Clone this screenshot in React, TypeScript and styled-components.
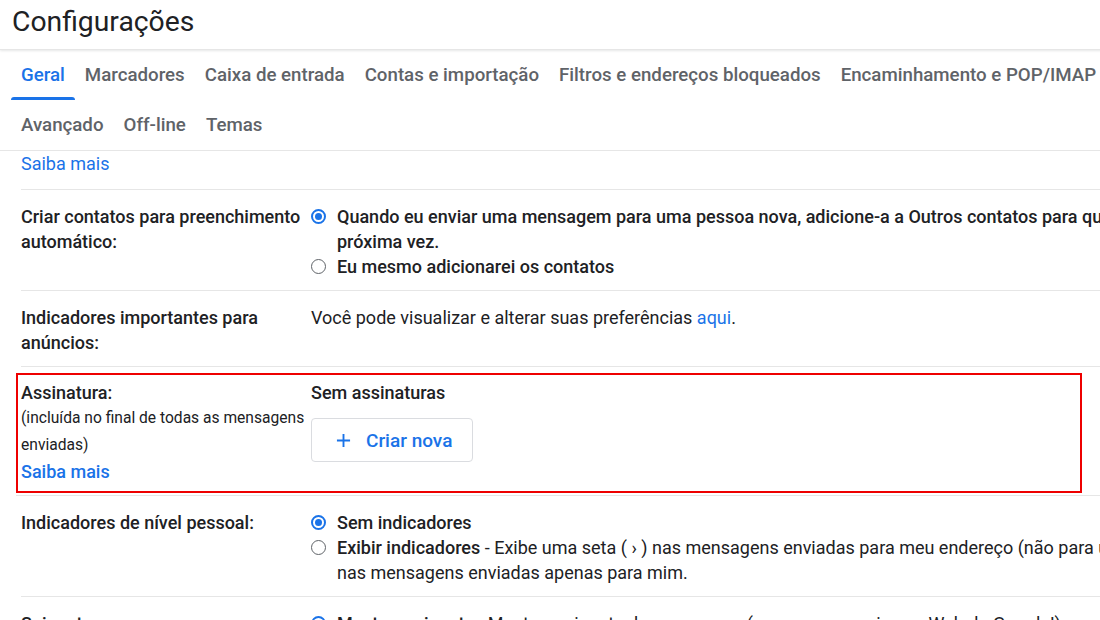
import styled, { createGlobalStyle, css } from 'styled-components';

const GlobalStyle = createGlobalStyle`
  body {
    margin: 0;
    overflow: hidden;
    background: #fff;
    font-family: Roboto, "Liberation Sans", Arial, sans-serif;
    color: #202124;
  }
`;

const Page = styled.div`
  width: 1600px;
`;

const Header = styled.header`
  height: 49px;
  padding: 0 12px;
  display: flex;
  align-items: center;
  border-bottom: 1px solid #e6e6e6;
  box-shadow: 0 1px 2px rgba(60, 64, 67, 0.12);
`;

const Title = styled.h1`
  margin: 0 0 6px;
  font-size: 28.3px;
  font-weight: 400;
  color: #202124;
`;

const TabBar = styled.nav`
  width: 1135px;
  padding-left: 11px;
  box-sizing: border-box;
  display: flex;
  flex-wrap: wrap;
  border-bottom: 1px solid #e6e6e6;
`;

interface TabProps {
  active?: boolean;
}

const Tab = styled.a<TabProps>`
  position: relative;
  height: 50px;
  padding: 0 10px;
  display: flex;
  align-items: center;
  font-size: 18.7px;
  font-weight: 500;
  color: #5f6368;
  cursor: pointer;

  ${(props) =>
    props.active &&
    css`
      color: #1a73e8;

      &::after {
        content: '';
        position: absolute;
        left: 0;
        right: 0;
        bottom: 0;
        height: 3px;
        background: #1a73e8;
        border-radius: 3px 3px 0 0;
      }
    `}
`;

const Content = styled.div`
  padding-left: 21px;
  font-size: 18px;
  line-height: 25px;
`;

const Tail = styled.div`
  padding-bottom: 13px;
  border-bottom: 1px solid #e6e6e6;
`;

const Row = styled.div`
  display: grid;
  grid-template-columns: 290px 1214px;
  padding: 14px 0 11px;
  border-bottom: 1px solid #e6e6e6;
`;

const HighlightRow = styled.div`
  padding: 6px 0 2px;
  margin-left: -5px;
  border-bottom: 1px solid #e6e6e6;
`;

const Highlight = styled.div`
  width: 1066px;
  box-sizing: border-box;
  display: grid;
  grid-template-columns: 290px 1fr;
  padding: 4.5px 0 7.5px 3px;
  border: 2px solid #ee0000;
`;

const Label = styled.div`
  font-weight: 500;
`;

const Note = styled.div`
  margin-right: -4px;
  font-size: 15.6px;
  font-weight: 400;
  line-height: 27px;
`;

const Link = styled.a`
  color: #1a73e8;
  text-decoration: none;
  cursor: pointer;
`;

const Value = styled.div``;

const Strong = styled.span`
  font-weight: 500;
`;

const Option = styled.label`
  display: flex;
  align-items: flex-start;
  gap: 11px;
`;

interface RadioProps {
  checked?: boolean;
}

const Radio = styled.span<RadioProps>`
  flex: none;
  margin-top: 5px;
  width: 15px;
  height: 15px;
  box-sizing: border-box;
  border-radius: 50%;
  border: 1.5px solid #5f6368;
  display: flex;
  align-items: center;
  justify-content: center;

  ${(props) =>
    props.checked &&
    css`
      border: 2px solid #1a73e8;

      &::after {
        content: '';
        width: 7px;
        height: 7px;
        border-radius: 50%;
        background: #1a73e8;
      }
    `}
`;

const NewButton = styled.button`
  margin-top: 13.5px;
  height: 44px;
  padding: 0 20px 0 24px;
  display: inline-flex;
  align-items: center;
  gap: 15px;
  background: #fff;
  border: 1px solid #dadce0;
  border-radius: 4px;
  font-family: Roboto, "Liberation Sans", Arial, sans-serif;
  font-size: 19px;
  font-weight: 500;
  color: #1a73e8;
  cursor: pointer;

  svg {
    width: 15px;
    height: 15px;
  }
`;

const PlusIcon = () => (
  <svg viewBox="0 0 16 16" fill="none" stroke="#1a73e8" strokeWidth="2">
    <path d="M8 1v14M1 8h14" />
  </svg>
);

const tabs = [
  'Geral',
  'Marcadores',
  'Caixa de entrada',
  'Contas e importação',
  'Filtros e endereços bloqueados',
  'Encaminhamento e POP/IMAP',
  'Avançado',
  'Off-line',
  'Temas',
];

const App = () => {
  return (
    <Page>
      <GlobalStyle />
      <Header>
        <Title>Configurações</Title>
      </Header>

      <TabBar>
        {tabs.map((t, i) => (
          <Tab key={t} active={i === 0}>
            {t}
          </Tab>
        ))}
      </TabBar>

      <Content>
        <Tail>
          <Link>Saiba mais</Link>
        </Tail>

        <Row>
          <Label>Criar contatos para preenchimento automático:</Label>
          <Value>
            <Option>
              <Radio checked />
              <Strong>
                Quando eu enviar uma mensagem para uma pessoa nova, adicione-a a Outros contatos para
                que eu possa usar o preenchimento automático na próxima vez.
              </Strong>
            </Option>
            <Option>
              <Radio />
              <Strong>Eu mesmo adicionarei os contatos</Strong>
            </Option>
          </Value>
        </Row>

        <Row>
          <Label>Indicadores importantes para anúncios:</Label>
          <Value>
            Você pode visualizar e alterar suas preferências <Link>aqui</Link>.
          </Value>
        </Row>

        <HighlightRow>
          <Highlight>
            <Label>
              Assinatura:
              <Note>(incluída no final de todas as mensagens enviadas)</Note>
              <Link>Saiba mais</Link>
            </Label>
            <Value>
              <Strong>Sem assinaturas</Strong>
              <div>
                <NewButton>
                  <PlusIcon />
                  Criar nova
                </NewButton>
              </div>
            </Value>
          </Highlight>
        </HighlightRow>

        <Row>
          <Label>Indicadores de nível pessoal:</Label>
          <Value>
            <Option>
              <Radio checked />
              <Strong>Sem indicadores</Strong>
            </Option>
            <Option>
              <Radio />
              <span>
                <Strong>Exibir indicadores</Strong> - Exibe uma seta ( › ) nas mensagens enviadas para
                meu endereço (não para uma lista de e-mails ou grupo) e uma seta dupla ( » ) nas
                mensagens enviadas apenas para mim.
              </span>
            </Option>
          </Value>
        </Row>

        <Row>
          <Label>Snippets:</Label>
          <Value>
            <Option>
              <Radio checked />
              <span>
                <Strong>Mostrar snippets</Strong> - Mostrar snippets da mensagem (como na pesquisa na
                Web do Google!).
              </span>
            </Option>
            <Option>
              <Radio />
              <span>
                <Strong>Sem snippets</Strong> - Mostrar somente o assunto.
              </span>
            </Option>
          </Value>
        </Row>
      </Content>
    </Page>
  );
};

export default App;
